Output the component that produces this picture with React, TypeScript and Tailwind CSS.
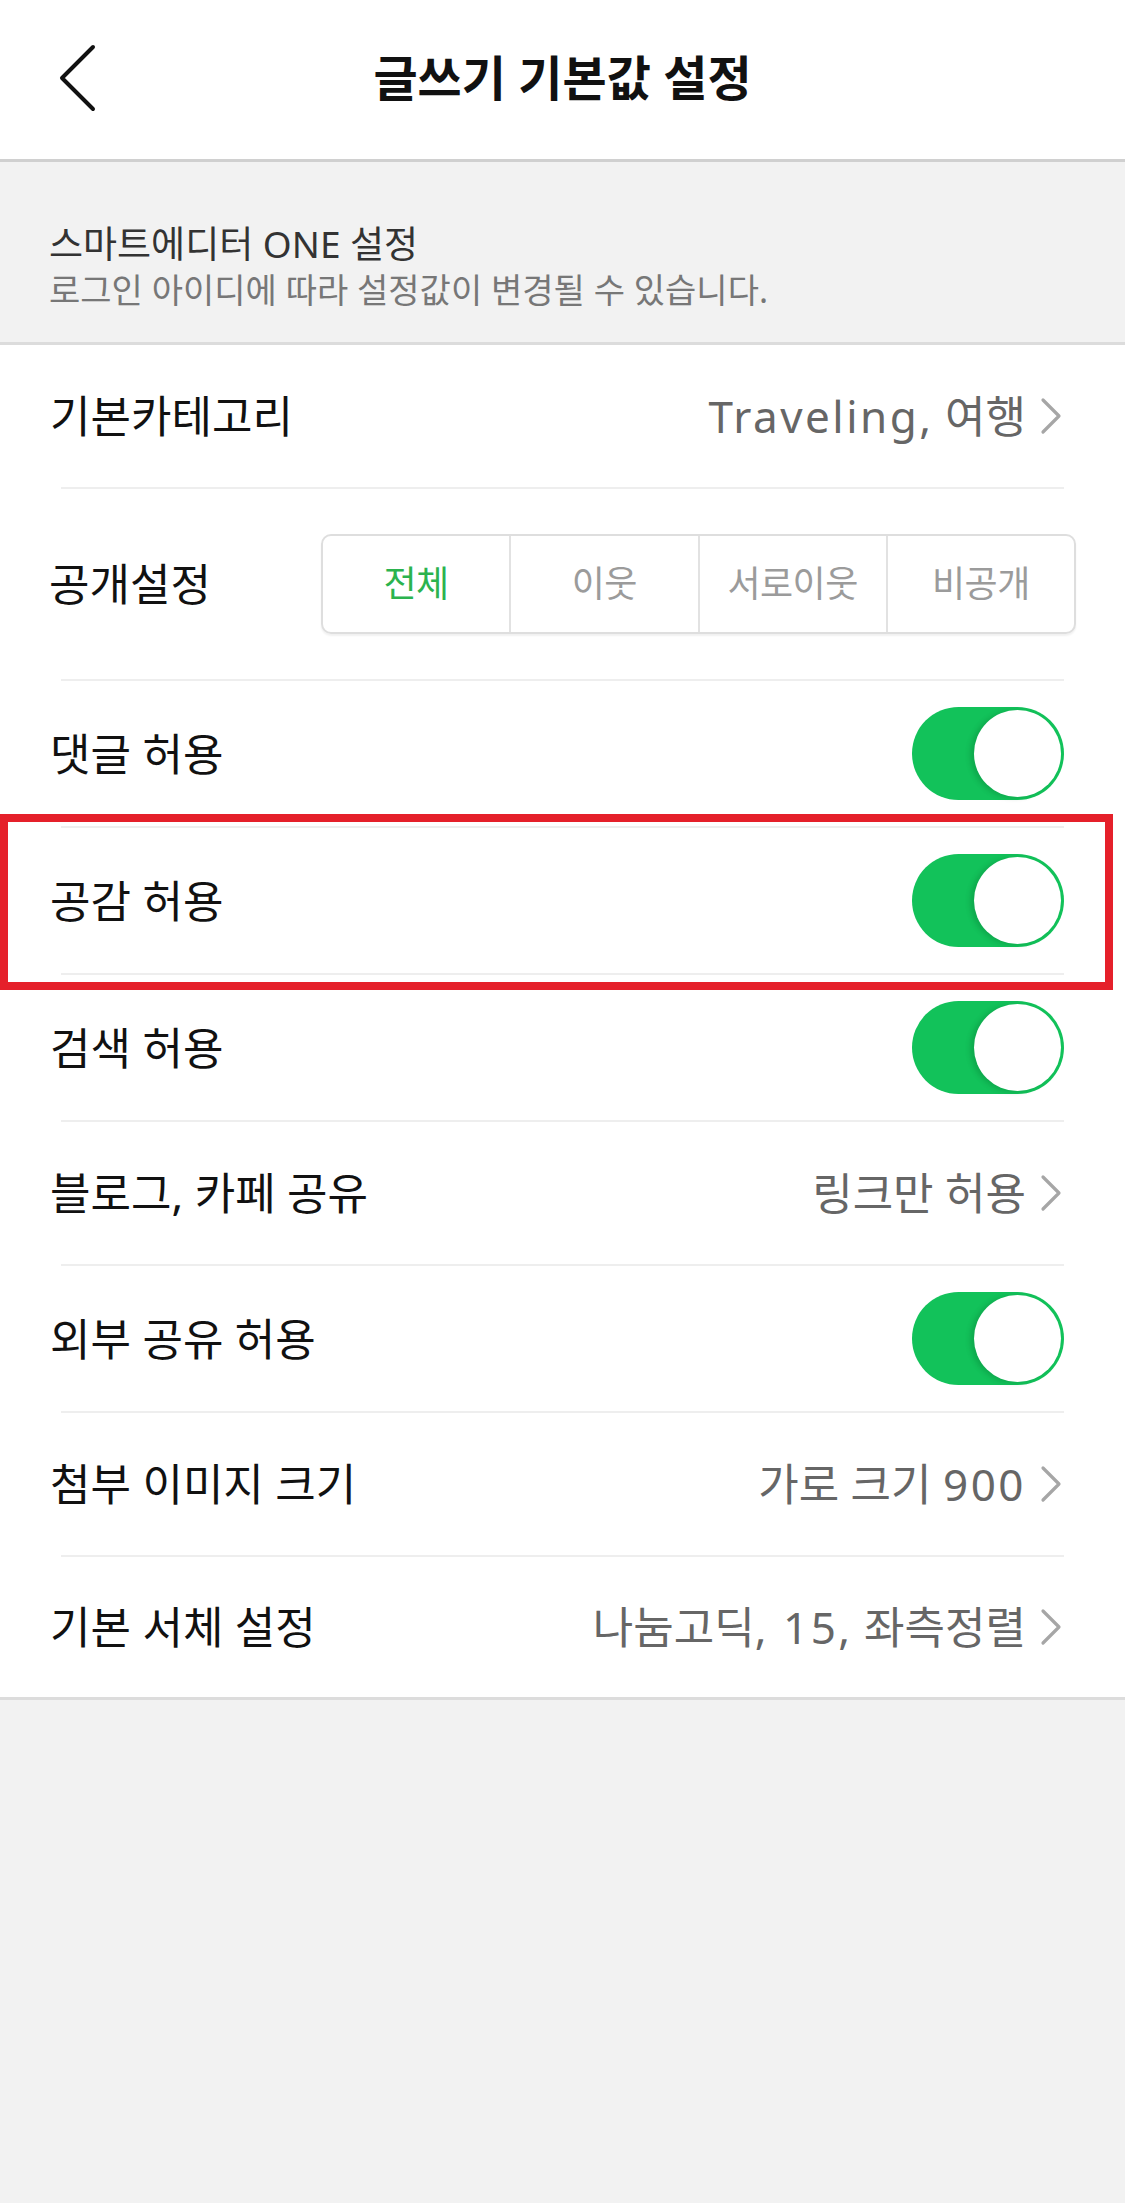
import React from "react";

const FONT = '"Noto Sans", "Noto Sans CJK KR", sans-serif';

function Chevron() {
  return (
    <svg width="22" height="38" viewBox="0 0 22 38" className="ml-[14px] shrink-0">
      <polyline points="3,3 19,19 3,35" fill="none" stroke="#a6a6a6" strokeWidth="3.2" strokeLinecap="round" strokeLinejoin="round" />
    </svg>
  );
}

function Toggle() {
  return (
    <div className="relative w-[152px] h-[93px] rounded-full bg-[#12c25a] shrink-0">
      <div className="absolute right-[3px] top-[3px] w-[87px] h-[87px] rounded-full bg-white shadow-[-4px_1px_5px_rgba(0,80,30,0.22)]" />
    </div>
  );
}

function Divider() {
  return <div className="mx-[61px] h-[2px] bg-[#eeeeee]" />;
}

function Label({ children }: { children: React.ReactNode }) {
  return <span className="text-[44px] text-[#111111] leading-none whitespace-nowrap">{children}</span>;
}

function L({ children }: { children: React.ReactNode }) {
  return <span className="tracking-[2.5px]">{children}</span>;
}

function ValueRow({ label, value, h = "h-[142px]" }: { label: string; value: React.ReactNode; h?: string }) {
  return (
    <div className={`flex items-center justify-between pl-[50px] pr-[63px] ${h}`}>
      <Label>{label}</Label>
      <div className="flex items-center">
        <span className="text-[44px] text-[#666666] leading-none whitespace-nowrap">{value}</span>
        <Chevron />
      </div>
    </div>
  );
}

function ToggleRow({ label }: { label: string }) {
  return (
    <div className="flex items-center justify-between pl-[50px] pr-[61px] h-[145px]">
      <Label>{label}</Label>
      <Toggle />
    </div>
  );
}

export default function App() {
  const segs = ["전체", "이웃", "서로이웃", "비공개"];
  return (
    <div className="w-full min-h-[2203px] bg-[#f2f2f2]" style={{ fontFamily: FONT }}>
      {/* Header */}
      <div className="grid grid-cols-[1fr_auto_1fr] items-center h-[159px] bg-white pb-[4px]">
        <div className="pl-[57px] flex items-center">
          <svg width="42" height="70" viewBox="0 0 42 70">
            <polyline points="36,4 5,35 36,66" fill="none" stroke="#111111" strokeWidth="4" strokeLinecap="round" strokeLinejoin="round" />
          </svg>
        </div>
        <h1 className="text-[48px] font-bold text-[#111111] leading-none">글쓰기 기본값 설정</h1>
        <div />
      </div>
      <div className="h-[3px] bg-[#d0d0d0]" />

      {/* Info */}
      <div className="h-[180px] bg-[#f2f2f2] pl-[49px] pt-[60px] flex flex-col gap-[4px]">
        <p className="text-[37px] leading-[44px] text-[#333333]">스마트에디터 ONE 설정</p>
        <p className="text-[34px] leading-[40px] text-[#777777]">로그인 아이디에 따라 설정값이 변경될 수 있습니다.</p>
      </div>
      <div className="h-[3px] bg-[#dcdcdc]" />

      {/* List */}
      <div className="bg-white">
        <ValueRow label="기본카테고리" value={<><L>Traveling,</L> 여행</>} />
        <Divider />
        <div className="flex items-center justify-between pl-[49px] pr-[49px] h-[190px]">
          <Label>공개설정</Label>
          <div className="flex w-[755px] h-[100px] rounded-[10px] border-2 border-[#dedede] shadow-[0_2px_2px_rgba(0,0,0,0.06)] overflow-hidden">
            {segs.map((s, i) => (
              <div
                key={s}
                className={`flex-1 flex items-center justify-center text-[36px] tracking-[-0.5px] leading-none ${
                  i === 0 ? "text-[#2bb34e]" : "text-[#9b9b9b]"
                } ${i < 3 ? "border-r-2 border-[#e2e2e2]" : ""}`}
              >
                {s}
              </div>
            ))}
          </div>
        </div>
        <Divider />
        <ToggleRow label="댓글 허용" />
        <Divider />
        <div className="relative">
          <ToggleRow label="공감 허용" />
          <div className="absolute z-10 -top-[14px] -bottom-[17px] left-0 right-[12px] border-[8px] border-[#e5202a] pointer-events-none" />
        </div>
        <Divider />
        <ToggleRow label="검색 허용" />
        <Divider />
        <ValueRow label="블로그, 카페 공유" value="링크만 허용" />
        <Divider />
        <ToggleRow label="외부 공유 허용" />
        <Divider />
        <ValueRow label="첨부 이미지 크기" value={<>가로 크기 <L>900</L></>} />
        <Divider />
        <ValueRow label="기본 서체 설정" value={<>나눔고딕<L>, 15,</L> 좌측정렬</>} h="h-[140px]" />
      </div>
      <div className="h-[3px] bg-[#dcdcdc]" />
    </div>
  );
}
